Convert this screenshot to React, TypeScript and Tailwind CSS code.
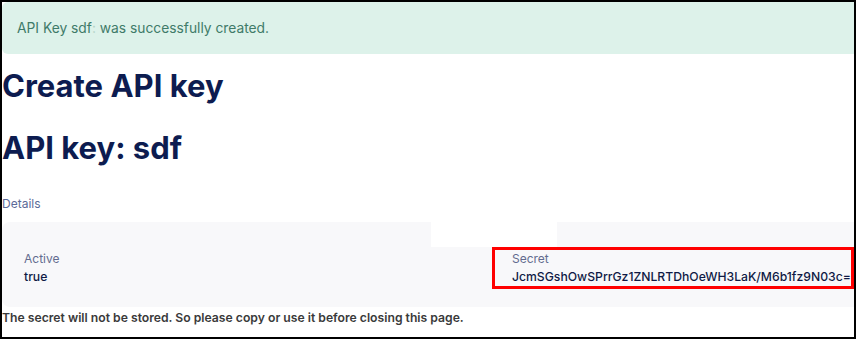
import React from "react";

const secret = "JcmSGshOwSPrrGz1ZNLRTDhOeWH3LaK/M6b1fz9N03c=";

function Field({ label, value }: { label: string; value: string }) {
  return (
    <>
      <div className="text-xs leading-[18px] text-[#636c8f]">{label}</div>
      <div className="text-[12.2px] leading-[18px] font-medium text-[#0f1a45] whitespace-nowrap">{value}</div>
    </>
  );
}

export default function App() {
  return (
    <div
      className="w-[856px] h-[339px] border-2 border-black bg-white overflow-hidden"
      style={{ fontFamily: "Inter, 'Noto Sans', sans-serif" }}
    >
      <div className="rounded-l-md bg-[#ddf2ea] px-[15px] py-4 text-[13.8px] leading-5 text-[#3f7b69]">
        API Key sdf<span className="text-[#b3d3c7]">:</span> was successfully created.
      </div>

      <h1 className="mt-3 text-[31px] leading-10 font-bold text-[#0d1c50]">Create API key</h1>
      <h2 className="mt-[22px] text-[31px] leading-10 font-bold text-[#0d1c50]">API key: sdf</h2>

      <div className="mt-[28px] text-xs leading-4 text-[#5b6a98]">Details</div>

      <div className="mt-[10px] rounded-l-lg bg-[#f8f8fa] pb-[18px]">
        <div className="flex h-[25px]">
          <div className="w-[429px]" />
          <div className="w-[126px] bg-white" />
        </div>
        <div className="flex">
          <div className="w-[490px] border-[3px] border-transparent pl-[19px]">
            <Field label="Active" value="true" />
          </div>
          <div className="flex-1 min-w-0 overflow-hidden border-[3px] border-[#ff0000] pl-[17px]">
            <Field label="Secret" value={secret} />
          </div>
        </div>
      </div>

      <p className="mt-[2px] text-[12.2px] leading-[18px] font-semibold text-[#3a3a3a]">
        The secret will not be stored. So please copy or use it before closing this page.
      </p>
    </div>
  );
}
